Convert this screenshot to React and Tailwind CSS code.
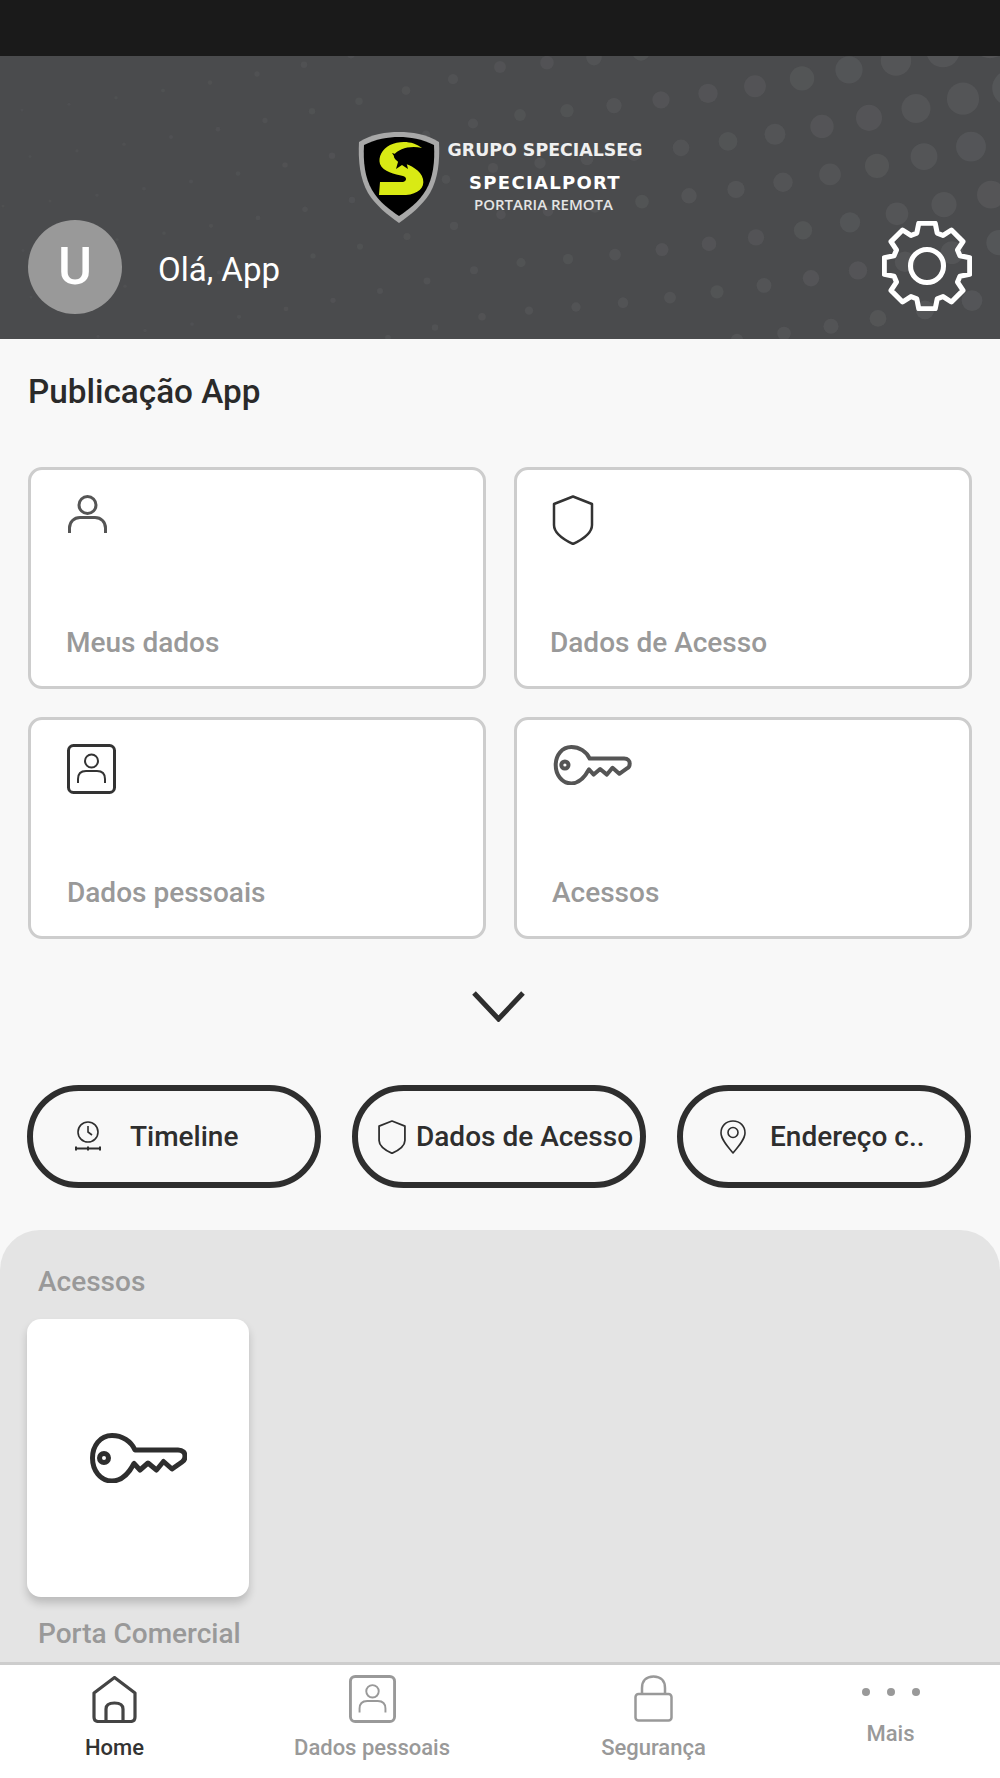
import React from "react";

const dots = [];
for (let i = -2; i < 24; i++) {
  for (let j = -2; j < 9; j++) {
    const x = 990 - i * 47 + j * 14 + (j % 2) * 6;
    const y = 40 + j * 48 + i * 11 - i * i * 0.35 + (x < 500 ? (500 - x) * 0.18 : 0);
    if (x < -10 || x > 1010 || y < 40 || y > 345) continue;
    const right = Math.max(0, x / 1000);
    const fall = 1 - Math.min(1, Math.max(0, (y - 56) / 300)) * 0.55;
    const r = 1.5 + 17 * Math.pow(right, 1.9) * fall;
    dots.push({ x, y, r, o: 0.2 + 0.25 * right });
  }
}

function HeaderDots() {
  return (
    <svg className="absolute inset-0" width="1000" height="283" viewBox="0 56 1000 283">
      {dots.map((d, i) => (
        <circle key={i} cx={d.x} cy={d.y} r={d.r} fill="#626365" opacity={d.o} />
      ))}
    </svg>
  );
}

function LogoShield() {
  return (
    <svg width="82" height="93" viewBox="0 0 82 93">
      <path d="M1 11 C14 3 28 1 41 1 C54 1 68 3 81 11 C82 30 80 48 72 62 C64 75 52 84 41 92 C30 84 18 75 10 62 C2 48 0 30 1 11 Z" fill="#a8a8a8" />
      <path d="M6 14 C18 8 30 6 41 6 C52 6 64 8 76 14 C77 31 75 47 68 59 C61 71 50 79 41 85 C32 79 21 71 14 59 C7 47 5 31 6 14 Z" fill="#000" />
      <path d="M64 17 C56 10 42 9 32 14 C24 18 20 26 22 33 C25 41 37 43 45 45 C49 46 49 50 45 51 L22 51 L21 64 L48 64 C60 63 67 57 65 48 C63 39 52 34 45 32 C40 31 35 28 36 24 C40 18 52 14 64 17 Z" fill="#d9ea14" />
      <path d="M34 22 L41 24 L47 20 L46 26 L53 25 L48 30 L50 38 L44 34 L38 38 L40 31 Z" fill="#000" />
    </svg>
  );
}

// 8-tooth gear outline, built once so the teeth stay even
const gearPath = (() => {
  const pts = [];
  for (let t = 0; t < 8; t++) {
    const a = (t * Math.PI) / 4 - Math.PI / 2;
    const step = [
      [9.2, -0.3],
      [11.6, -0.19],
      [11.6, 0.19],
      [9.2, 0.3],
    ];
    step.forEach(([r, da]) => {
      pts.push([12 + r * Math.cos(a + da), 12 + r * Math.sin(a + da)]);
    });
  }
  return "M" + pts.map((p) => p[0].toFixed(2) + " " + p[1].toFixed(2)).join(" L") + " Z";
})();

function Gear() {
  return (
    <svg width="90" height="90" viewBox="0 0 24 24" fill="none" stroke="#fff" strokeWidth="1.35" strokeLinejoin="round">
      <path d={gearPath} />
      <circle cx="12" cy="12" r="4.4" />
    </svg>
  );
}

function Person({ w, h, stroke, sw }) {
  return (
    <svg width={w} height={h} viewBox="0 0 39 39" fill="none" stroke={stroke} strokeWidth={sw}>
      <circle cx="19.5" cy="10" r="8.5" />
      <path d="M1.5 38 V33 C1.5 27 6 22.5 12 22.5 H27 C33 22.5 37.5 27 37.5 33 V38" />
    </svg>
  );
}

function ContactIcon({ w, h, stroke }) {
  return (
    <svg width={w} height={h} viewBox="0 0 49 50" fill="none" stroke={stroke}>
      <rect x="1.5" y="1.5" width="46" height="47" rx="5" strokeWidth="3" />
      <circle cx="24.5" cy="17" r="6.5" strokeWidth="2" />
      <path d="M11 39 V35 C11 30 14 27 19 27 H30 C35 27 38 30 38 35 V39" strokeWidth="2" />
    </svg>
  );
}

function Shield({ w, h, stroke, sw }) {
  return (
    <svg width={w} height={h} viewBox="0 0 41 50" fill="none" stroke={stroke} strokeWidth={sw} strokeLinejoin="round">
      <path d="M20.5 1.5 L39.5 9 V30 C39.5 38 29 45 20.5 49 C12 45 1.5 38 1.5 30 V9 Z" />
    </svg>
  );
}

function Key({ w, h, stroke }) {
  return (
    <svg width={w} height={h} viewBox="0 0 97 50" fill="none" stroke={stroke} strokeWidth="5" strokeLinejoin="round" strokeLinecap="round">
      <path d="M45 17 H88 C93 17 95 20 95 23 C95 26 94 28 92 29 L82 36 L73.5 28.5 L66.5 37 L58 30 L50 37 L44 30.5 C38 42 30 48 22 48 C10 48 2.5 37 2.5 25 C2.5 13 10 2.5 22 2.5 C32 2.5 41 8 45 17 Z" />
      <circle cx="14" cy="25" r="4.5" />
    </svg>
  );
}

function ClockIcon() {
  return (
    <svg width="26" height="31" viewBox="0 0 26 31" fill="none" stroke="#2e2e2e" strokeWidth="1.6">
      <circle cx="13" cy="11" r="10" />
      <path d="M13 5 V11 L17 14" />
      <path d="M1 27.5 H25 M1 25.5 V29.5 M13 25.5 V29.5 M25 25.5 V29.5" strokeWidth="2" />
    </svg>
  );
}

function Pin() {
  return (
    <svg width="26" height="34" viewBox="0 0 26 34" fill="none" stroke="#2e2e2e" strokeWidth="1.6" strokeLinejoin="round">
      <path d="M13 33 C7 26 1 19 1 13 C1 6 6 1 13 1 C20 1 25 6 25 13 C25 19 19 26 13 33 Z" />
      <circle cx="13" cy="12.5" r="5" />
    </svg>
  );
}

function Home() {
  return (
    <svg width="45" height="47" viewBox="0 0 45 47" fill="none" stroke="#444" strokeLinejoin="round">
      <path d="M22.5 1.5 L43 17 V41 C43 44 41 45.5 38.5 45.5 H6.5 C4 45.5 2 44 2 41 V17 Z" strokeWidth="3.2" />
      <path d="M14 45 V33 C14 29 17 27 22.5 27 C28 27 31 29 31 33 V45" strokeWidth="3.2" />
    </svg>
  );
}

function Lock() {
  return (
    <svg width="39" height="47" viewBox="0 0 39 47" fill="none" stroke="#999" strokeWidth="2.5">
      <rect x="1.5" y="19" width="36" height="26.5" rx="3" />
      <path d="M8 19 V13 C8 6 12 1.5 19.5 1.5 C27 1.5 31 6 31 13 V19" />
    </svg>
  );
}

function ChevronDown() {
  return (
    <svg width="53" height="31" viewBox="0 0 53 31" fill="none" stroke="#2e2e2e" strokeWidth="5">
      <path d="M2 2 L26.5 28 L51 2" />
    </svg>
  );
}

function Tile({ icon, label, pl, pt }) {
  return (
    <div className={`flex h-[222px] flex-col justify-between rounded-[14px] border-[3px] border-[#cdcdcd] bg-white pb-[28px] ${pl} ${pt}`}>
      <div>{icon}</div>
      <span className="text-[28px] leading-[30px] font-medium text-[#999]">{label}</span>
    </div>
  );
}

function Pill({ icon, label, className }) {
  return (
    <div className={`flex h-[103px] w-[294px] items-center rounded-[52px] border-[6px] border-[#2e2e2e] ${className}`}>
      {icon}
      <span className="text-[28px] leading-none font-medium whitespace-nowrap text-[#2e2e2e]">{label}</span>
    </div>
  );
}

export default function App() {
  return (
    <div className="flex h-[1778px] w-[1000px] flex-col overflow-hidden bg-[#f8f8f8] font-['Roboto',sans-serif]">
      <div className="h-[56px] bg-[#1a1a1a]" />

      <header className="relative h-[283px] overflow-hidden bg-[#4a4b4d]">
        <HeaderDots />
        <div className="relative flex h-full flex-col px-[28px]">
          <div className="ml-[330px] flex h-[164px] items-start gap-[6px] pt-[75px]">
            <LogoShield />
            <div className="flex w-[198px] flex-col items-center pt-[9px] text-white">
              <span className="font-['DejaVu_Sans',sans-serif] text-[17.4px] leading-[20px] font-bold whitespace-nowrap text-[#f0f0f0]">GRUPO SPECIALSEG</span>
              <span className="mt-[13px] font-['DejaVu_Sans',sans-serif] text-[18px] leading-[20px] font-bold tracking-[1.3px] whitespace-nowrap">SPECIALPORT</span>
              <span className="mt-[1px] pr-[3px] font-['Open_Sans',sans-serif] text-[15px] leading-[20px] font-semibold whitespace-nowrap text-[#e4e4e4]">PORTARIA REMOTA</span>
            </div>
          </div>
          <div className="flex items-center">
            <div className="flex size-[94px] items-center justify-center rounded-full bg-[#999]">
              <span className="text-[52px] leading-none font-medium text-white">U</span>
            </div>
            <span className="mt-[4px] ml-[36px] text-[33px] leading-none text-white">Olá, App</span>
            <div className="mt-[-2px] ml-auto">
              <Gear />
            </div>
          </div>
        </div>
      </header>

      <main className="flex flex-1 flex-col">
        <h1 className="mt-[35px] ml-[28px] text-[33.3px] leading-[36px] font-medium text-[#2a2a2a]">Publicação App</h1>

        <div className="mt-[57px] grid grid-cols-2 gap-x-[28px] gap-y-[28px] px-[28px]">
          <Tile pl="pl-[35px]" pt="pt-[25px]" label="Meus dados" icon={<div className="ml-[2px]"><Person w={39} h={39} stroke="#555" sw={3} /></div>} />
          <Tile pl="pl-[33px]" pt="pt-[25px]" label="Dados de Acesso" icon={<div className="ml-[2px]"><Shield w={42} h={50} stroke="#333" sw={2.5} /></div>} />
          <Tile pl="pl-[36px]" pt="pt-[24px]" label="Dados pessoais" icon={<ContactIcon w={49} h={50} stroke="#333" />} />
          <Tile pl="pl-[35px]" pt="pt-[25px]" label="Acessos" icon={<Key w={81} h={40} stroke="#555" />} />
        </div>

        <div className="mt-[52px] flex justify-center pr-[3px]">
          <ChevronDown />
        </div>

        <div className="mt-[63px] flex justify-between pr-[29px] pl-[27px]">
          <Pill className="pl-[42px]" icon={<span className="mr-[29px]"><ClockIcon /></span>} label="Timeline" />
          <Pill className="pl-[20px]" icon={<span className="mr-[10px]"><Shield w={28} h={34} stroke="#2e2e2e" sw={2.6} /></span>} label="Dados de Acesso" />
          <Pill className="pl-[37px]" icon={<span className="mr-[24px]"><Pin /></span>} label="Endereço c.." />
        </div>

        <section className="mt-[42px] flex-1 rounded-t-[40px] bg-[#e4e4e4] pt-[37px] pl-[27px]">
          <div className="ml-[11px] text-[28px] leading-[30px] font-medium text-[#999]">Acessos</div>
          <div className="mt-[22px] flex h-[278px] w-[222px] items-center justify-center rounded-[14px] bg-white shadow-[0_6px_8px_rgba(0,0,0,0.18)]">
            <Key w={97} h={50} stroke="#2e2e2e" />
          </div>
          <div className="mt-[21px] ml-[11px] text-[28px] leading-[32px] font-medium text-[#999]">Porta Comercial</div>
        </section>
      </main>

      <nav className="relative flex h-[116px] border-t-[3px] border-[#cdcdcd] bg-white text-[22px] leading-[26px] font-medium text-[#999]">
        <div className="flex w-[229px] flex-col items-center pt-[11px] text-[#333]">
          <Home />
          <span className="mt-[12px]">Home</span>
        </div>
        <div className="flex w-[286px] flex-col items-center pt-[10px]">
          <ContactIcon w={47} h={48} stroke="#999" />
          <span className="mt-[12px]">Dados pessoais</span>
        </div>
        <div className="flex w-[277px] flex-col items-center pt-[10px]">
          <Lock />
          <span className="mt-[13px]">Segurança</span>
        </div>
        <div className="flex w-[197px] flex-col items-center pt-[23px]">
          <div className="flex gap-[17px]">
            <span className="size-[8px] rounded-full bg-[#999]" />
            <span className="size-[8px] rounded-full bg-[#999]" />
            <span className="size-[8px] rounded-full bg-[#999]" />
          </div>
          <span className="mt-[25px]">Mais</span>
        </div>
      </nav>
    </div>
  );
}
